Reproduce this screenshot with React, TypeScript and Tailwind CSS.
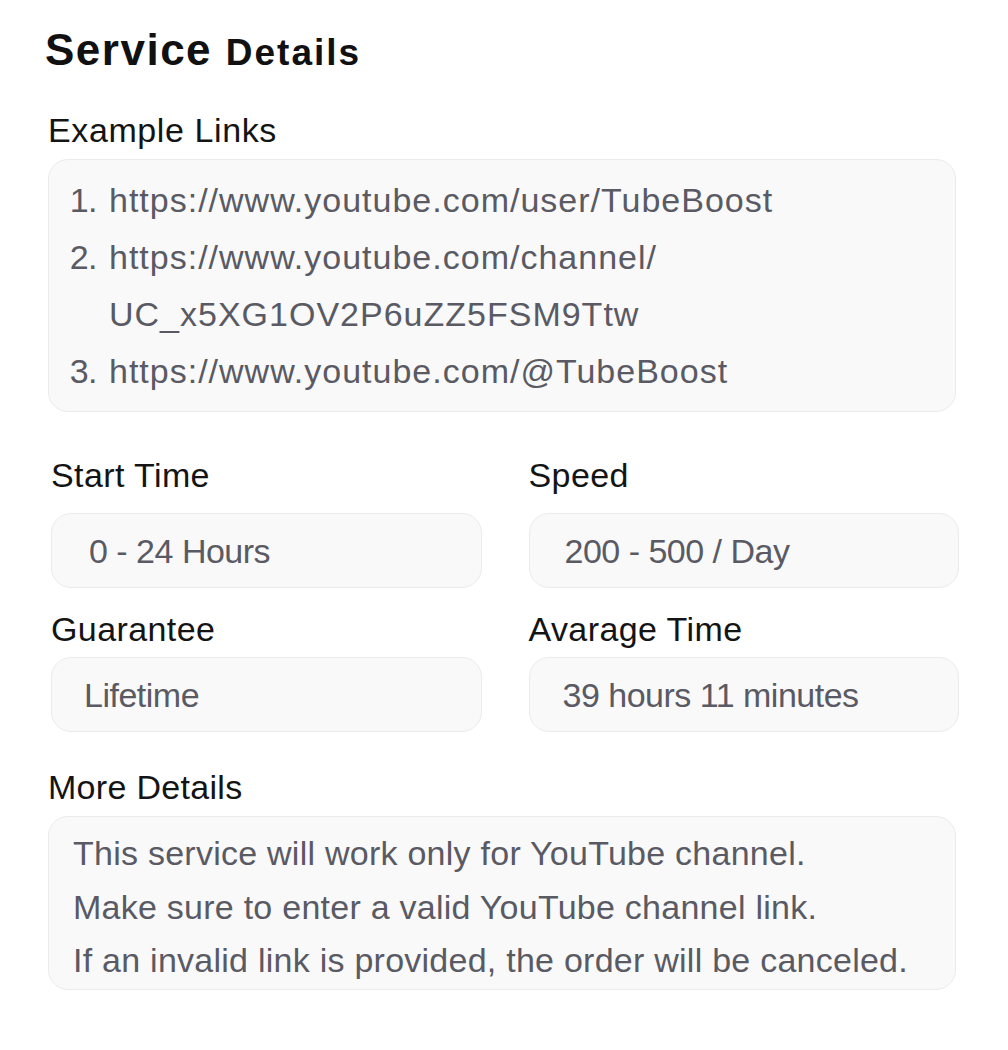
import React from "react";

const fields = [
  { label: "Start Time", value: "0 - 24 Hours", pad: "pl-[37px]" },
  { label: "Speed", value: "200 - 500 / Day", pad: "pl-[35px]" },
  { label: "Guarantee", value: "Lifetime", pad: "pl-[32px]" },
  { label: "Avarage Time", value: "39 hours 11 minutes", pad: "pl-[33px]" },
];

const links: React.ReactNode[] = [
  "https://www.youtube.com/user/TubeBoost",
  <>
    https://www.youtube.com/channel/
    <wbr />
    UC_x5XG1OV2P6uZZ5FSM9Ttw
  </>,
  "https://www.youtube.com/@TubeBoost",
];

function Field({ label, value, pad, row }: { label: string; value: string; pad: string; row: number }) {
  return (
    <div className="flex flex-col">
      <div className="text-[34px] leading-[40px] tracking-[0.4px] text-[#141414]">{label}</div>
      <div
        className={
          (row === 0 ? "mt-[18px] " : "mt-[8px] ") +
          "flex h-[75px] items-center rounded-[20px] border border-[#ebebeb] bg-[#f9f9f9] text-[34px] leading-[40px] tracking-[-0.5px] text-[#5a5a64] " +
          pad
        }
      >
        {value}
      </div>
    </div>
  );
}

export default function App() {
  return (
    <div className="min-h-[1050px] w-[1008px] bg-white font-['Liberation_Sans',Arial,sans-serif]">
      <div className="flex w-[956px] flex-col pl-[48px] pt-[28px]">
        <h1 className="-ml-[3px] text-[44px] font-bold leading-[44px] tracking-[1.5px] text-[#111111]">
          Service <span className="text-[37px] tracking-[2px]">Details</span>
        </h1>

        <div className="mt-[35px] text-[34px] leading-[40px] tracking-[0.6px] text-[#141414]">Example Links</div>
        <div className="mt-[9px] rounded-[20px] border border-[#ebebeb] bg-[#f9f9f9] pb-[11px] pl-[18px] pr-[20px] pt-[12px]">
          <div className="flex flex-col text-[34px] leading-[57px] tracking-[1px] text-[#5a5a64]">
            {links.map((l, i) => (
              <div key={i} className="flex gap-[12px]">
                <span className="w-[30px] shrink-0 text-right tracking-[-0.5px]">{i + 1}.</span>
                <span className="min-w-0">{l}</span>
              </div>
            ))}
          </div>
        </div>

        <div className="-mr-[3px] ml-[3px] mt-[43px] grid grid-cols-2 gap-x-[47px] gap-y-[21px]">
          {fields.map((f, i) => (
            <Field key={f.label} label={f.label} value={f.value} pad={f.pad} row={i < 2 ? 0 : 1} />
          ))}
        </div>

        <div className="mt-[35px] text-[34px] leading-[40px] tracking-[0.3px] text-[#141414]">More Details</div>
        <div className="mt-[9px] rounded-[20px] border border-[#ebebeb] bg-[#f9f9f9] pb-[1px] pl-[24px] pr-[10px] pt-[10px] text-[34px] leading-[53.5px] tracking-[0.25px] text-[#5a5a64]">
          <div>This service will work only for YouTube channel.</div>
          <div>Make sure to enter a valid YouTube channel link.</div>
          <div>If an invalid link is provided, the order will be canceled.</div>
        </div>
      </div>
    </div>
  );
}
